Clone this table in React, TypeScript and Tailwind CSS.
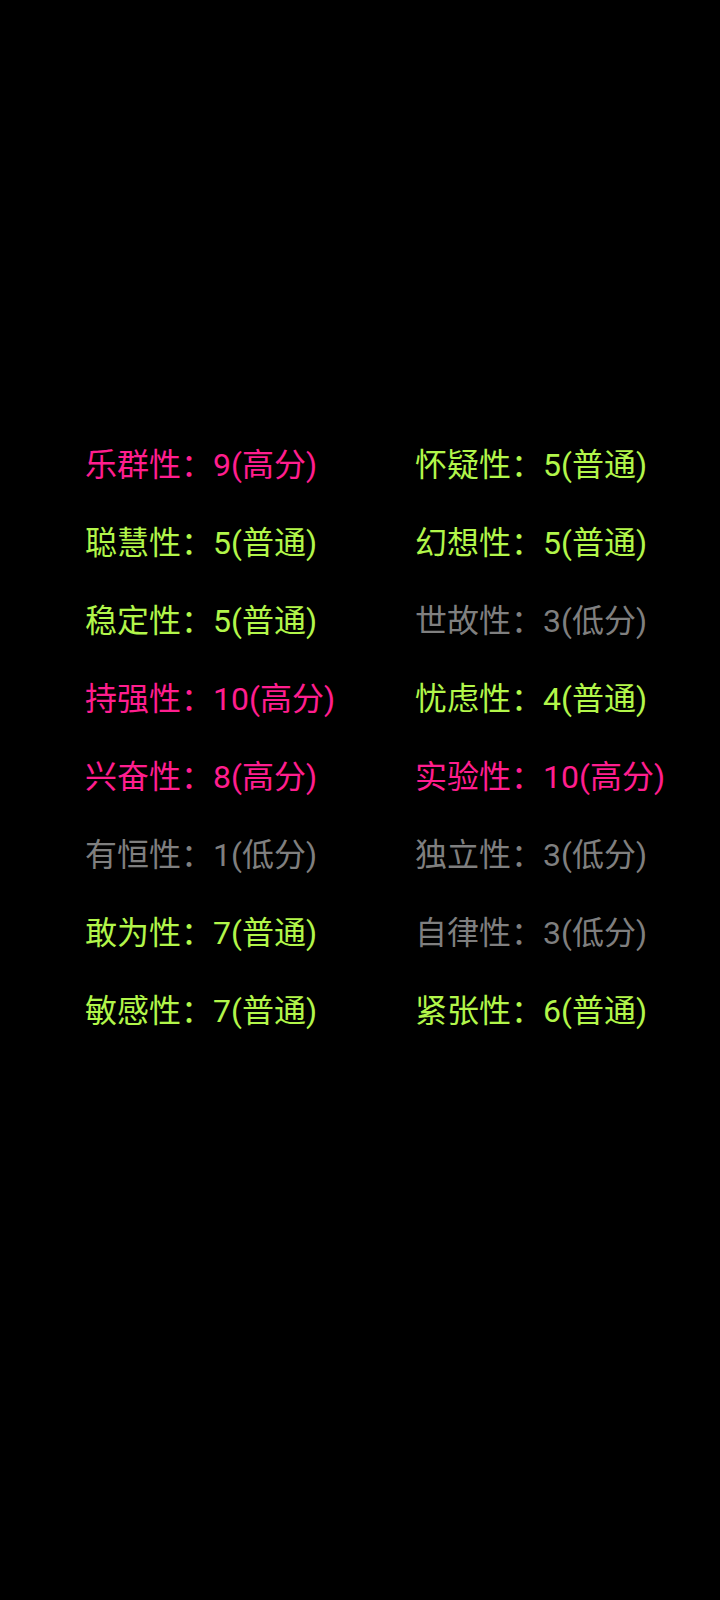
import React from 'react';

type Level = 'high' | 'normal' | 'low';

interface Trait {
  name: string;
  score: number;
  level: Level;
}

const levelText: Record<Level, string> = {
  high: '高分',
  normal: '普通',
  low: '低分',
};

const levelClass: Record<Level, string> = {
  high: 'text-[#ff1e8e]',
  normal: 'text-[#b2f64a]',
  low: 'text-[#7f7f7f]',
};

const traits: Trait[] = [
  { name: '乐群性', score: 9, level: 'high' },
  { name: '怀疑性', score: 5, level: 'normal' },
  { name: '聪慧性', score: 5, level: 'normal' },
  { name: '幻想性', score: 5, level: 'normal' },
  { name: '稳定性', score: 5, level: 'normal' },
  { name: '世故性', score: 3, level: 'low' },
  { name: '持强性', score: 10, level: 'high' },
  { name: '忧虑性', score: 4, level: 'normal' },
  { name: '兴奋性', score: 8, level: 'high' },
  { name: '实验性', score: 10, level: 'high' },
  { name: '有恒性', score: 1, level: 'low' },
  { name: '独立性', score: 3, level: 'low' },
  { name: '敢为性', score: 7, level: 'normal' },
  { name: '自律性', score: 3, level: 'low' },
  { name: '敏感性', score: 7, level: 'normal' },
  { name: '紧张性', score: 6, level: 'normal' },
];

const App: React.FC = () => {
  return (
    <div
      className="min-h-[1600px] w-[720px] bg-black pt-[426px] pl-[85px]"
      style={{ fontFamily: 'Roboto, "Noto Sans CJK SC", sans-serif' }}
    >
      <div className="grid grid-cols-[330px_1fr]">
        {traits.map((t) => (
          <div
            key={t.name}
            className={`flex h-[78px] items-center whitespace-nowrap text-[32px] leading-none ${levelClass[t.level]}`}
          >
            {t.name}：{t.score}({levelText[t.level]})
          </div>
        ))}
      </div>
    </div>
  );
};

export default App;
